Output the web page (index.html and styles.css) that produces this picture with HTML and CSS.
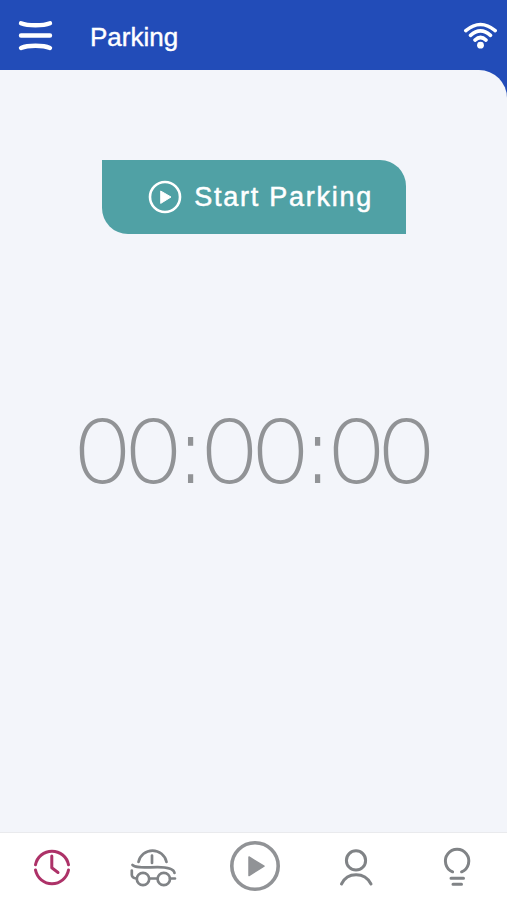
FILE: index.html
```html
<!DOCTYPE html>
<html lang="en">
<head>
<meta charset="utf-8">
<title>Parking</title>
<link rel="stylesheet" href="styles.css">
</head>
<body>
<div class="app">
  <header class="bar">
    <svg class="menu" viewBox="15 15 42 42" role="img" aria-label="Menu"><path d="M21 23.2C28 26 43 26 50 23.200M21 35.500H50M21 48C28 45 43 45 50 48"/></svg>
    <h1 class="title">Parking</h1>
    <svg class="wifi" viewBox="460 18 42 36" role="img" aria-label="Wi-Fi"><path d="M465.800 30.600Q480.500 18.400 495.200 30.600M470.500 35.300Q480.500 26.300 490.500 35.300M475 40.100Q480.500 34.900 486 40.100"/><circle cx="480.500" cy="45.200" r="3.400"/></svg>
  </header>
  <main class="panel">
    <button class="start">
      <svg class="start-icon" viewBox="0 0 34 34"><circle cx="17" cy="17" r="15"/><path d="M13 11.200L23 17L13 23.200Z"/></svg>
      <span>Start Parking</span>
    </button>
    <div class="timer"><span class="d">0</span><span class="d">0</span><span class="c">:</span><span class="d">0</span><span class="d">0</span><span class="c">:</span><span class="d">0</span><span class="d">0</span></div>
  </main>
  <nav class="tabs">
    <a class="tab active"><svg viewBox="21.500 836 60 60"><path d="M35 864.800A16.800 16.800 0 0 1 68 864.800M35 870A16.800 16.800 0 0 0 68 870M51.300 856V867.800L57.500 872.500"/></svg></a>
    <a class="tab"><svg class="car" viewBox="122.500 836 60 60"><path d="M138 862A14.300 14.300 0 0 1 166 862M151.500 855.500V863M132 865C136 868.500 146 867.200 157 867.200C165 867.200 173 868 174 873M131.300 870.500V875Q131.500 878 136 878.500M149 878.500H157M169.500 878.500H174.500"/><circle cx="142.500" cy="879" r="6.200"/><circle cx="163.300" cy="879" r="6.200"/></svg></a>
    <a class="tab"><svg class="play" viewBox="225 836 60 60"><circle cx="255" cy="866" r="23.200"/><path d="M249 857L264 866.200L249 875.500Z"/></svg></a>
    <a class="tab"><svg viewBox="326 836 60 60"><circle cx="356" cy="860.400" r="9.600"/><path d="M341.500 884C347.500 871.800 364.500 871.800 371 884"/></svg></a>
    <a class="tab"><svg viewBox="427 836 60 60"><path d="M452.600 871.800A11.700 11.700 0 1 1 461.600 871.800M451 878.200H463.500M453 884.300H461.500"/></svg></a>
  </nav>
</div>
</body>
</html>
```
FILE: styles.css
```css
* { box-sizing: border-box; }
body { margin: 0; font-family: "Liberation Sans", Arial, sans-serif; }
svg { display: block; fill: none; stroke-linecap: round; stroke-linejoin: round; }
.app { width: 507px; height: 900px; display: flex; flex-direction: column; background: #224cb8; overflow: hidden; }
.bar { height: 70px; padding: 0 5px 0 15px; display: flex; align-items: center; flex: none; color: #fff; }
.menu { width: 42px; height: 42px; stroke: #fff; stroke-width: 4.4; margin-top: 2px; }
.title { margin: 4px auto 0 33px; font-size: 26px; font-weight: 400; line-height: 30px; -webkit-text-stroke: 0.4px #fff; }
.wifi { width: 42px; height: 36px; stroke: #fff; stroke-width: 3.6; margin-top: 2px; }
.wifi circle { fill: #fff; stroke: none; }
.panel { flex: 1; background: #f3f5fa; border-top-right-radius: 28px; display: flex; flex-direction: column; align-items: center; padding-top: 90px; }
.start { width: 304.5px; height: 74px; margin-left: 1px; padding: 0 0 0 46px; border: 0; border-radius: 0 26px 0 26px; background: #50a1a5; color: #fff; display: flex; align-items: center; gap: 12.5px; font-family: inherit; font-size: 27px; letter-spacing: 1.75px; white-space: nowrap; -webkit-text-stroke: 0.5px #fff; }
.start-icon { width: 34px; height: 34px; flex: none; stroke: #fff; stroke-width: 2.6; }
.start-icon path { fill: #fff; stroke-width: 1; }
.timer { display: flex; align-items: baseline; margin: 162px 0 0 2px; height: 110px; font-family: Inter, sans-serif; font-weight: 200; font-size: 88px; line-height: 110px; color: #919396; }
.d { width: 50.800px; display: flex; justify-content: center; transform: scaleX(1.1); }
.c { width: 25.400px; display: flex; justify-content: center; font-family: "Liberation Sans", Arial, sans-serif; transform: scaleX(.62); }
.tabs { height: 68px; flex: none; background: #fff; border-top: 1px solid #e9eaed; display: grid; grid-template-columns: repeat(5, 101.300px); padding-left: 1.500px; }
.tab { display: flex; justify-content: center; padding-top: 3px; stroke: #808386; stroke-width: 3; }
.tab svg { width: 60px; height: 60px; }
.active { stroke: #ad3268; }
.car { stroke-width: 2.700; }
.play { stroke: #919396; stroke-width: 3.600; }
.play path { fill: #919396; stroke-width: 1.500; }
```
